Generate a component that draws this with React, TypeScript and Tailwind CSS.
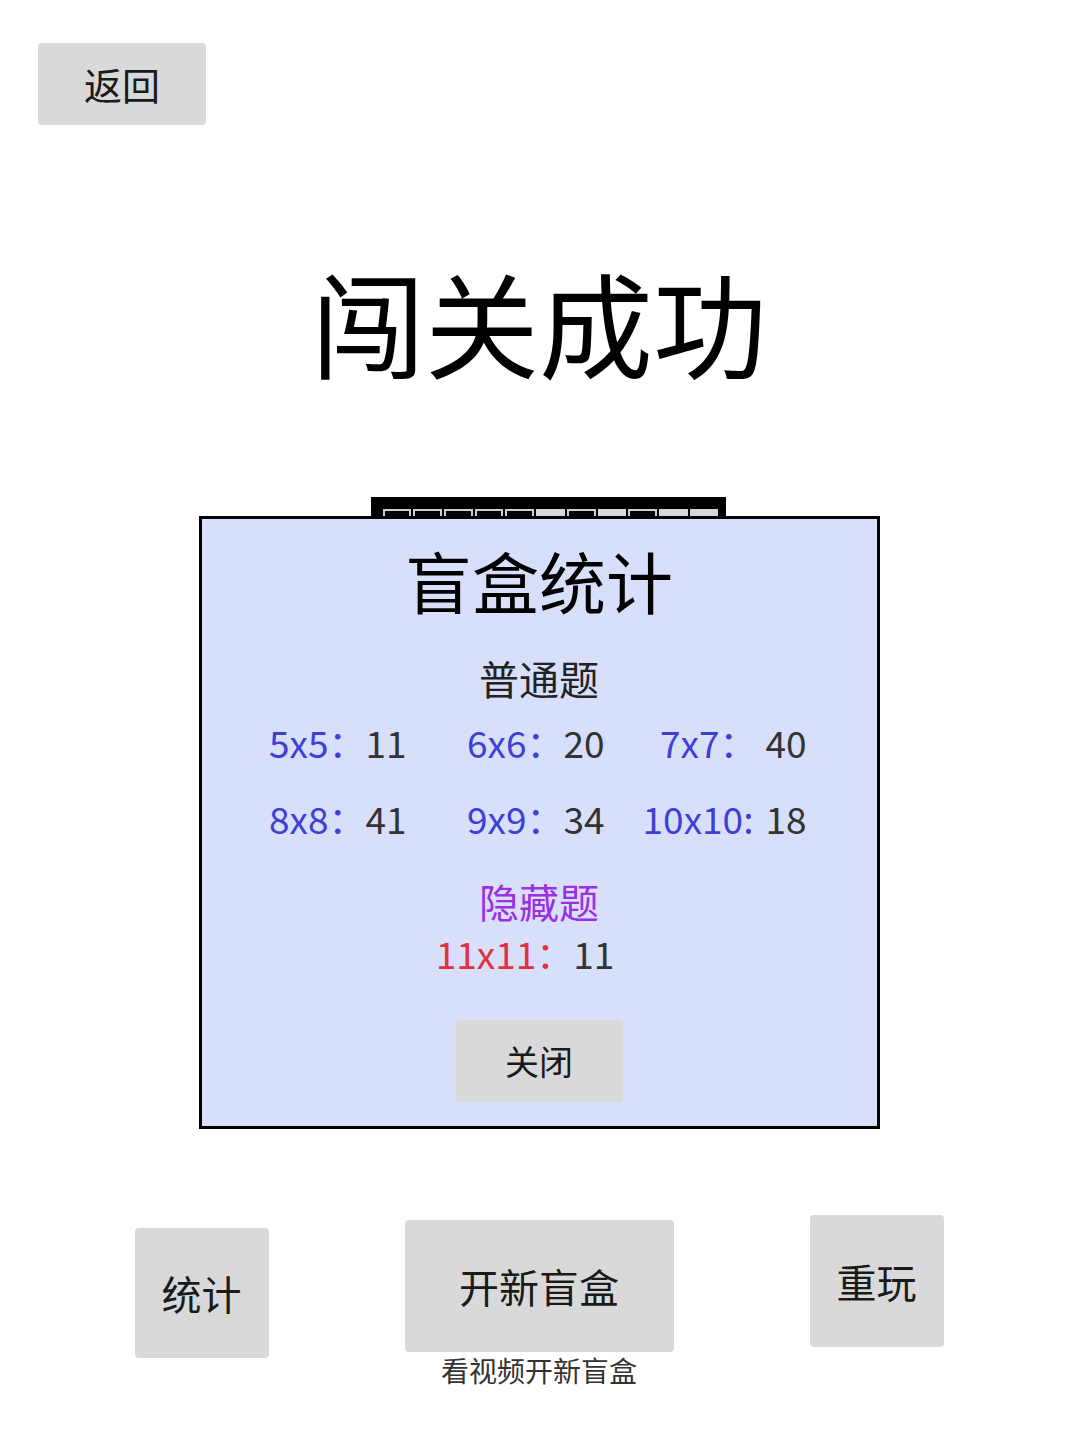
import React from 'react'

const normal = [
  { label: '5x5：', value: '11', gap: '' },
  { label: '6x6：', value: '20', gap: '' },
  { label: '7x7：', value: '40', gap: 'ml-[9px]' },
  { label: '8x8：', value: '41', gap: '' },
  { label: '9x9：', value: '34', gap: '' },
  { label: '10x10:', value: '18', gap: 'ml-[12px]' },
]

// top row of the board peeking out from behind the panel
const boardRow = [false, false, false, false, false, true, false, true, false, true, true]

function GreyButton({
  children,
  className,
}: {
  children: React.ReactNode
  className: string
}) {
  return (
    <button
      className={`flex items-center justify-center rounded-[4px] bg-[#d9d9d9] text-[#1a1a1a] ${className}`}
    >
      {children}
    </button>
  )
}

export default function App() {
  return (
    <div className="min-h-[1437px] w-[1078px] bg-white font-['Noto_Sans_CJK_SC',sans-serif] text-black">
      {/* Back */}
      <div className="pl-[38px] pt-[43px]">
        <GreyButton className="h-[82px] w-[168px] text-[38px] leading-none">返回</GreyButton>
      </div>

      {/* Headline */}
      <h1 className="mt-[131px] h-[130px] text-center text-[114px] font-normal leading-[130px]">
        闯关成功
      </h1>

      {/* Board edge + stats panel */}
      <div className="mt-[111px] flex flex-col items-center">
        <div className="ml-[18px] h-[19px] w-[355px] overflow-hidden bg-black pl-[12px] pt-[12px]">
          <div className="grid w-[336px] grid-cols-11 gap-[2px]">
            {boardRow.map((filled, i) => (
              <div
                key={i}
                className={
                  filled
                    ? 'h-[20px] bg-[#d8d8d8]'
                    : 'h-[20px] border-[2px] border-[#cfcfcf] bg-black'
                }
              />
            ))}
          </div>
        </div>

        <div className="h-[613px] w-[681px] border-[3px] border-black bg-[#d8dffb]">
          <div className="mt-[21px] h-[80px] text-center text-[67px] leading-[80px]">盲盒统计</div>

          <div className="mt-[33px] h-[50px] text-center text-[40px] leading-[50px] text-[#222]">
            普通题
          </div>

          <div className="mt-[9px] grid grid-cols-[205px_198px_202px] gap-y-[16px]">
            {normal.map((c) => (
              <div key={c.label} className="h-[60px] whitespace-nowrap text-right text-[37px] leading-[60px]">
                <span className="text-[#3f3fd6]">{c.label}</span>
                <span className={`text-[#333] ${c.gap}`}>{c.value}</span>
              </div>
            ))}
          </div>

          <div className="mt-[28px] h-[50px] text-center text-[40px] leading-[50px] text-[#9a30e6]">
            隐藏题
          </div>

          <div className="mt-[2px] flex h-[50px] justify-center pr-[28px] text-[37px] leading-[50px]">
            <span className="text-[#e2303c]">11x11：</span>
            <span className="text-[#333]">11</span>
          </div>

          <div className="mt-[42px] flex justify-center">
            <GreyButton className="h-[82px] w-[167px] text-[34px] leading-none">关闭</GreyButton>
          </div>
        </div>
      </div>

      {/* Bottom actions */}
      <div className="mt-[86px] flex items-start justify-center gap-[136px]">
        <GreyButton className="mt-[13px] h-[130px] w-[134px] text-[40px] leading-none">统计</GreyButton>
        <div className="mt-[5px] flex flex-col items-center">
          <GreyButton className="h-[132px] w-[269px] text-[40px] leading-none">开新盲盒</GreyButton>
          <div className="h-[36px] text-[28px] leading-[36px] text-[#333]">看视频开新盲盒</div>
        </div>
        <GreyButton className="h-[132px] w-[134px] text-[40px] leading-none">重玩</GreyButton>
      </div>
    </div>
  )
}
